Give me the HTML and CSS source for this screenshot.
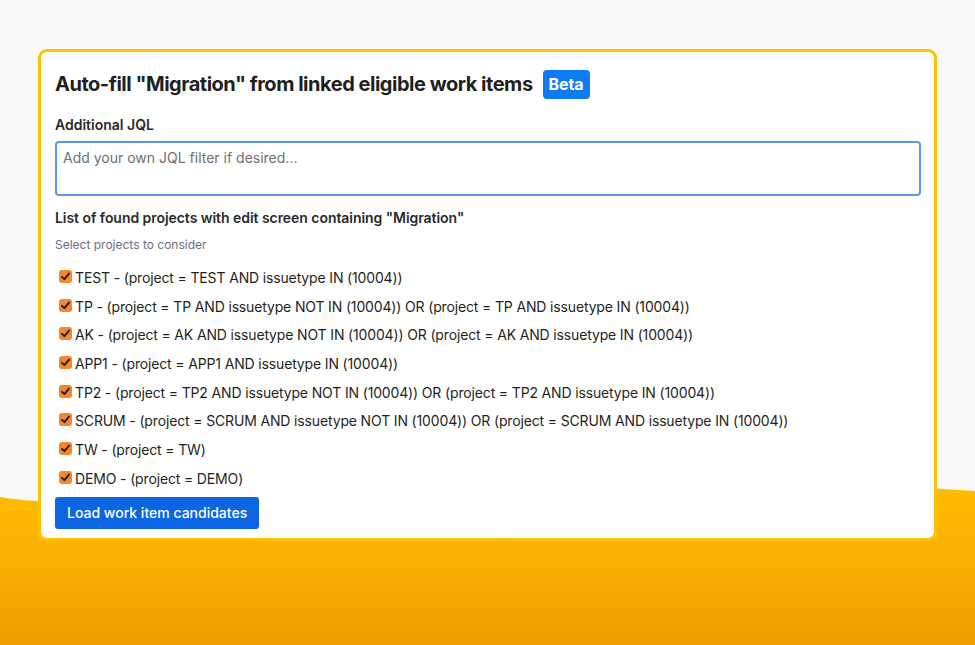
FILE: index.html
```html
<!DOCTYPE html>
<html>
<head>
<meta charset="utf-8">
<link rel="stylesheet" href="styles.css">
</head>
<body>
<svg class="wave" width="975" height="645" viewBox="0 0 975 645" aria-hidden="true">
  <defs>
    <linearGradient id="g" x1="0" y1="0" x2="0" y2="1">
      <stop offset="0" stop-color="#ffbe00"/>
      <stop offset="1" stop-color="#ee9e00"/>
    </linearGradient>
  </defs>
  <path d="M0,497 C150,522 700,468 975,491 L975,645 L0,645 Z" fill="url(#g)"/>
</svg>
<div class="card">
  <div class="title-row">
    <h1 class="title">Auto-fill "Migration" from linked eligible work items</h1>
    <span class="badge">Beta</span>
  </div>
  <label class="label" for="jql">Additional JQL</label>
  <textarea id="jql" class="jql" placeholder="Add your own JQL filter if desired..."></textarea>
  <div class="section">List of found projects with edit screen containing "Migration"</div>
  <div class="hint">Select projects to consider</div>
  <ul class="projects">
    <li class="row"><span class="box"><svg viewBox="0 0 13 13" width="13" height="13"><path d="M3 6.8 L5.4 9.2 L10 3.6" fill="none" stroke="#1e1e1e" stroke-width="1.9" stroke-linecap="round" stroke-linejoin="round"/></svg></span><span>TEST - (project = TEST AND issuetype IN (10004))</span></li>
    <li class="row"><span class="box"><svg viewBox="0 0 13 13" width="13" height="13"><path d="M3 6.8 L5.4 9.2 L10 3.6" fill="none" stroke="#1e1e1e" stroke-width="1.9" stroke-linecap="round" stroke-linejoin="round"/></svg></span><span>TP - (project = TP AND issuetype NOT IN (10004)) OR (project = TP AND issuetype IN (10004))</span></li>
    <li class="row"><span class="box"><svg viewBox="0 0 13 13" width="13" height="13"><path d="M3 6.8 L5.4 9.2 L10 3.6" fill="none" stroke="#1e1e1e" stroke-width="1.9" stroke-linecap="round" stroke-linejoin="round"/></svg></span><span>AK - (project = AK AND issuetype NOT IN (10004)) OR (project = AK AND issuetype IN (10004))</span></li>
    <li class="row"><span class="box"><svg viewBox="0 0 13 13" width="13" height="13"><path d="M3 6.8 L5.4 9.2 L10 3.6" fill="none" stroke="#1e1e1e" stroke-width="1.9" stroke-linecap="round" stroke-linejoin="round"/></svg></span><span>APP1 - (project = APP1 AND issuetype IN (10004))</span></li>
    <li class="row"><span class="box"><svg viewBox="0 0 13 13" width="13" height="13"><path d="M3 6.8 L5.4 9.2 L10 3.6" fill="none" stroke="#1e1e1e" stroke-width="1.9" stroke-linecap="round" stroke-linejoin="round"/></svg></span><span>TP2 - (project = TP2 AND issuetype NOT IN (10004)) OR (project = TP2 AND issuetype IN (10004))</span></li>
    <li class="row"><span class="box"><svg viewBox="0 0 13 13" width="13" height="13"><path d="M3 6.8 L5.4 9.2 L10 3.6" fill="none" stroke="#1e1e1e" stroke-width="1.9" stroke-linecap="round" stroke-linejoin="round"/></svg></span><span>SCRUM - (project = SCRUM AND issuetype NOT IN (10004)) OR (project = SCRUM AND issuetype IN (10004))</span></li>
    <li class="row"><span class="box"><svg viewBox="0 0 13 13" width="13" height="13"><path d="M3 6.8 L5.4 9.2 L10 3.6" fill="none" stroke="#1e1e1e" stroke-width="1.9" stroke-linecap="round" stroke-linejoin="round"/></svg></span><span>TW - (project = TW)</span></li>
    <li class="row"><span class="box"><svg viewBox="0 0 13 13" width="13" height="13"><path d="M3 6.8 L5.4 9.2 L10 3.6" fill="none" stroke="#1e1e1e" stroke-width="1.9" stroke-linecap="round" stroke-linejoin="round"/></svg></span><span>DEMO - (project = DEMO)</span></li>
  </ul>
  <button class="load">Load work item candidates</button>
</div>
</body>
</html>
```

FILE: styles.css
```css
* { box-sizing: border-box; }
html, body { margin: 0; padding: 0; }
body {
  width: 975px;
  height: 645px;
  overflow: hidden;
  background: #fafafa;
  font-family: Inter, "Noto Sans", "Liberation Sans", sans-serif;
  color: #1f1f21;
  position: relative;
}
.wave {
  position: absolute;
  left: 0;
  top: 0;
  z-index: 0;
}
.card {
  position: relative;
  z-index: 1;
  margin: 49px 38px 0 38px;
  background: #fff;
  border: 3px solid #ffc000;
  border-radius: 9px;
  padding: 18px 13px 9px 14px;
}
.title-row {
  display: flex;
  align-items: center;
  gap: 10px;
  height: 29px;
}
.title {
  margin: 0 0 2px 0;
  font-size: 20px;
  font-weight: 700;
  letter-spacing: -0.48px;
  color: #1f1f21;
}
.badge {
  background: #0c7cf5;
  color: #fff;
  font-weight: 700;
  font-size: 16px;
  height: 29px;
  line-height: 29px;
  padding: 0 6px;
  border-radius: 4px;
  letter-spacing: -0.1px;
}
.label {
  display: block;
  margin-top: 16px;
  font-size: 14px;
  line-height: 20px;
  font-weight: 600;
  color: #292a2e;
}
.jql {
  display: block;
  width: 100%;
  height: 55px;
  margin-top: 6px;
  border: 2px solid #5a97ec;
  border-radius: 4px;
  padding: 5px 6px;
  font-family: inherit;
  font-size: 14px;
  line-height: 20px;
  resize: none;
  outline: none;
}
.jql::placeholder { color: #6e6e73; }
.section {
  margin-top: 12px;
  font-size: 14px;
  line-height: 20px;
  font-weight: 600;
  color: #292a2e;
  letter-spacing: -0.05px;
}
.hint {
  margin-top: 9px;
  font-size: 12px;
  line-height: 16px;
  color: #6b6e86;
}
.projects {
  list-style: none;
  margin: 10px 0 0 0;
  padding: 0;
}
.row {
  display: flex;
  align-items: center;
  height: 28.7px;
  font-size: 14px;
  color: #1f1f21;
  letter-spacing: -0.15px;
}
.box {
  display: block;
  width: 13px;
  height: 13px;
  margin: -2px 3px 0 4px;
  background: #f5862a;
  border-radius: 3px;
}
.box svg { display: block; }
.load {
  display: block;
  margin-top: 4px;
  height: 32px;
  padding: 0 12px;
  background: #0c66e4;
  color: #fff;
  border: none;
  border-radius: 3px;
  font-family: inherit;
  font-size: 14px;
  font-weight: 500;
}
```
